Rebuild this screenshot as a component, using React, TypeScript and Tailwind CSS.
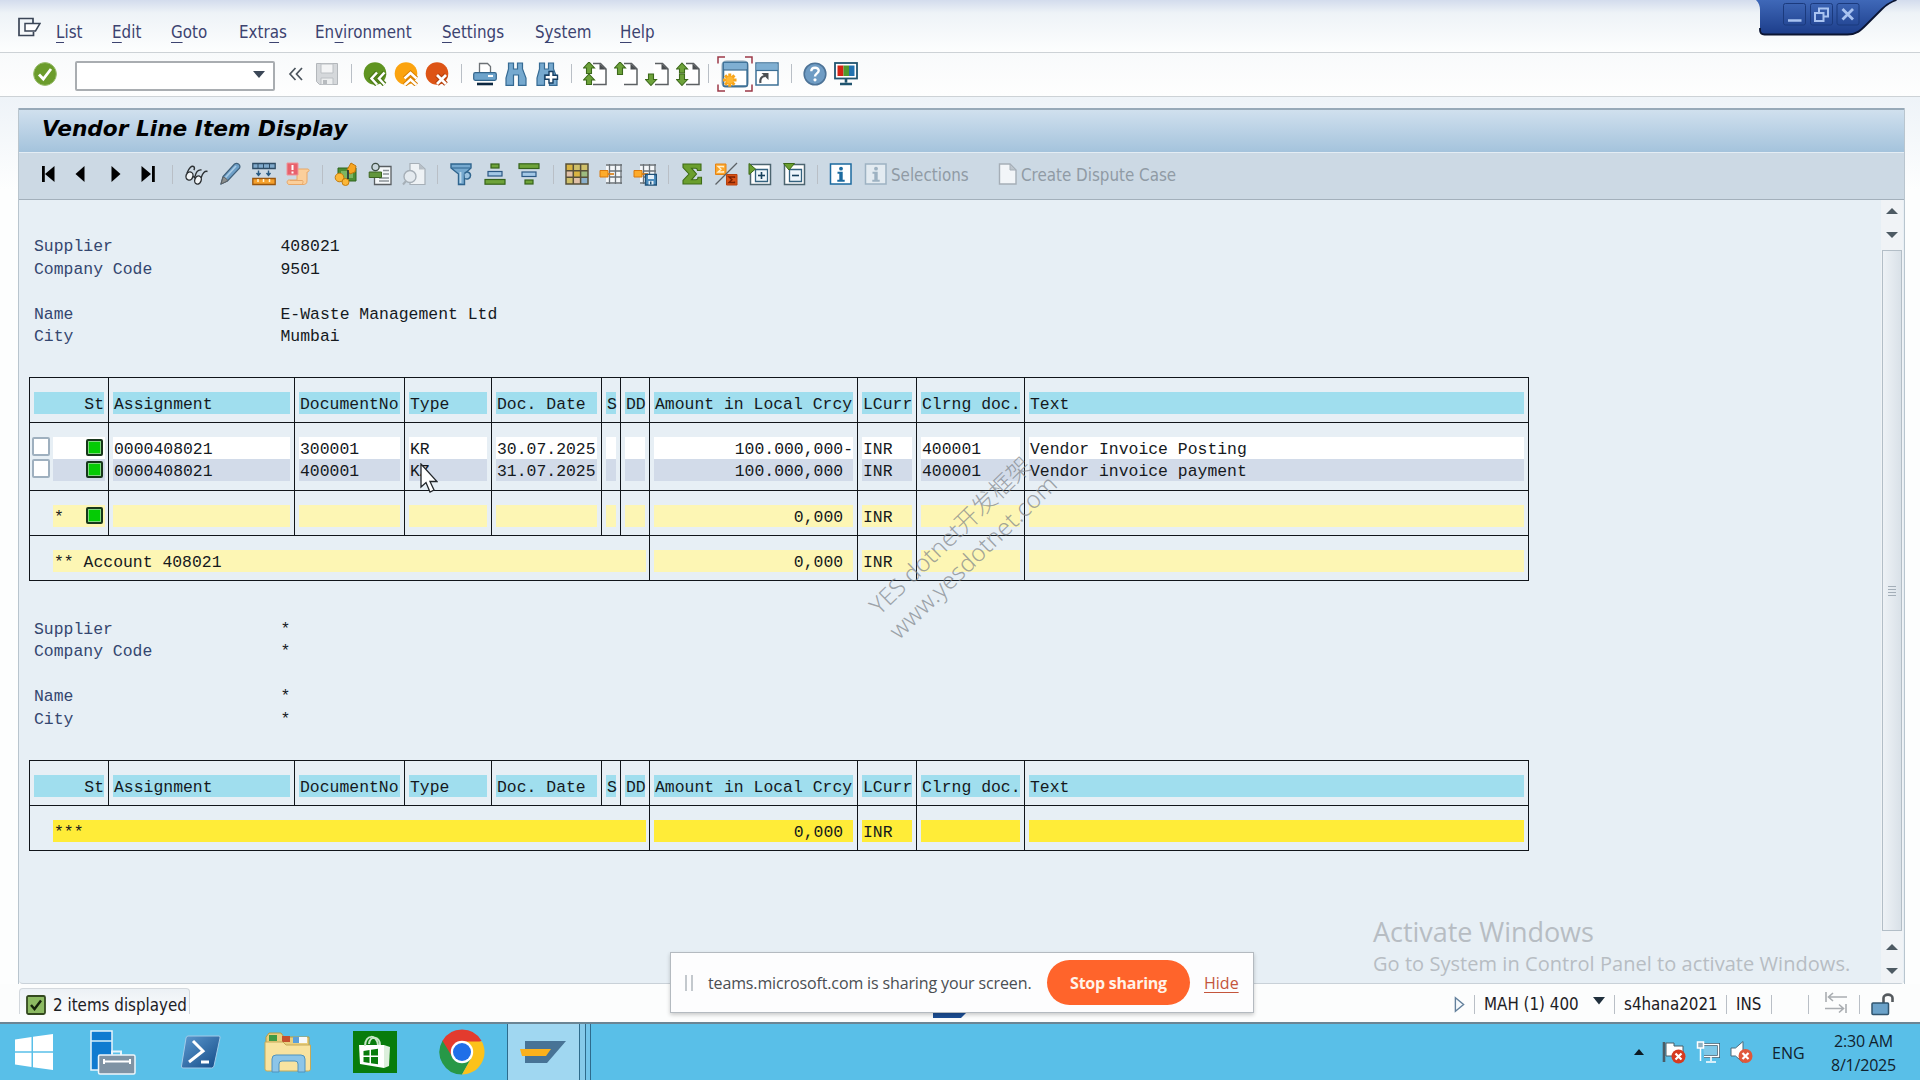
import type { ReactNode } from 'react';

interface IconProps {
  children: ReactNode;
  className?: string;
}

function Icon({ children, className = 'h-6 w-6' }: IconProps) {
  return (
    <svg viewBox="0 0 24 24" fill="none" className={`shrink-0 ${className}`}>
      {children}
    </svg>
  );
}

function Label({ children, className = '' }: IconProps) {
  return (
    <span
      className={`inline-block origin-left scale-x-[0.89] font-[family-name:'DejaVu_Sans',sans-serif] whitespace-nowrap ${className}`}
    >
      {children}
    </span>
  );
}

function Separator({ className = 'w-6' }: { className?: string }) {
  return (
    <div className={`flex shrink-0 justify-center ${className}`}>
      <div className="h-[19px] w-px bg-[#b9bfc6]" />
    </div>
  );
}

/* ---------- standard toolbar icons ---------- */

function OkIcon() {
  return (
    <Icon>
      <circle cx="12" cy="12" r="11.4" fill="#6b9c2c" stroke="#9cbf72" />
      <path d="M6 12.5l4.3 4.5L18 7" stroke="#fff" strokeWidth="2.8" />
    </Icon>
  );
}

function SaveIcon() {
  return (
    <Icon>
      <path d="M1.5 1.5h21v21h-18l-3-3z" fill="#d5d8db" stroke="#b3b7bb" />
      <path d="M6 2h12v9H6z" fill="#f3f4f5" stroke="#bcc0c4" />
      <path d="M6 16h12v6.500H6z" fill="#eceeef" stroke="#bcc0c4" />
      <path d="M8 18h4v4H8z" fill="#b7bbbf" />
    </Icon>
  );
}

function BackIcon() {
  return (
    <Icon>
      <circle cx="12" cy="11.500" r="11.300" fill="#5f9421" />
      <path d="M14 10.500l-5.500 6 5.500 6M21.500 10.500l-5.500 6 5.500 6" stroke="#4c7a17" strokeWidth="5" />
      <path d="M14 10.500l-5.500 6 5.500 6M21.500 10.500l-5.500 6 5.500 6" stroke="#fff" strokeWidth="2.500" />
    </Icon>
  );
}

function ExitIcon() {
  return (
    <Icon>
      <circle cx="12" cy="11.500" r="11.300" fill="#fba30f" />
      <path d="M10.500 16.500l6-5.500 6 5.500M10.500 23l6-5.500 6 5.500" stroke="#d97f00" strokeWidth="4.600" />
      <path d="M10.500 16.500l6-5.500 6 5.500M10.500 23l6-5.500 6 5.500" stroke="#fff" strokeWidth="2.400" />
    </Icon>
  );
}

function CancelIcon() {
  return (
    <Icon>
      <circle cx="12" cy="11.500" r="11.300" fill="#dd5415" />
      <path d="M12 13l9 9M21 13l-9 9" stroke="#b23d08" strokeWidth="5" />
      <path d="M12 13l9 9M21 13l-9 9" stroke="#fff" strokeWidth="2.800" />
    </Icon>
  );
}

function PrintIcon() {
  return (
    <Icon>
      <path d="M6.500 11V1.500h8l3 3V11" fill="#fff" stroke="#6d7276" strokeWidth="1.300" />
      <rect x=".7" y="10.700" width="22.600" height="7.600" rx="1.500" fill="#6da3cb" stroke="#33658c" strokeWidth="1.200" />
      <path d="M15 14h5" stroke="#fff" strokeWidth="2" />
      <path d="M4 22h16" stroke="#0c2740" strokeWidth="2.600" />
    </Icon>
  );
}

function FindIcon({ next = false }: { next?: boolean }) {
  return (
    <Icon>
      <path
        d="M4.500 1h5v6h4V1h5v6l3.500 9v7.300h-7.500V13h-5v10.300H2V16l2.500-9z"
        fill="#76a9cf"
        stroke="#356a93"
        strokeWidth="1.200"
      />
      {next && (
        <path
          d="M14 9.500h4v3.700h4.500v4H18V21h-4v-3.800H10v-4h4z"
          fill="#fff"
          stroke="#173f63"
          strokeWidth="1.400"
        />
      )}
    </Icon>
  );
}

function PageIcon({ arrows }: { arrows: string[] }) {
  return (
    <Icon>
      <path d="M8.500 1.500h9l5.500 5.500v15.500H8.500z" fill="#fff" />
      <path d="M10 1.500h7.500l5.500 5.500v15.500H10" stroke="#5c6063" strokeWidth="1.500" />
      <path d="M16.500 1.500l6.500 6h-6.500z" fill="#4a4e51" />
      {arrows.map((d) => (
        <path key={d} d={d} fill="#6da23a" stroke="#3c691b" strokeWidth="1.100" />
      ))}
    </Icon>
  );
}

function NewSessionIcon() {
  return (
    <Icon className="h-7 w-7">
      <rect x="2" y="2" width="20.500" height="20.500" rx="1" fill="#fff" stroke="#3d7096" strokeWidth="1.600" />
      <path d="M2.500 2.500h19.500v5.500H2.500z" fill="#7fafd2" />
      <path d="M2 8.500h20.500" stroke="#3d7096" strokeWidth="1.200" />
      <path d="M7.500 11.500v11.500M1.700 17.200h11.600M3.500 13.200l8 8M11.500 13.200l-8 8" stroke="#f8a51a" strokeWidth="2.600" />
      <circle cx="7.500" cy="17.200" r="3" fill="#ffb733" />
    </Icon>
  );
}

function ShortcutIcon() {
  return (
    <Icon>
      <rect x="1" y="1" width="22" height="22" fill="#fff" stroke="#3d7096" strokeWidth="1.500" />
      <path d="M1.500 1.500h21v6.500h-21z" fill="#7fafd2" />
      <path d="M1 8.500h22" stroke="#3d7096" strokeWidth="1.200" />
      <path d="M5.500 21c-.8-4 1-6.500 4.500-7" stroke="#4b4f52" strokeWidth="2.200" />
      <path d="M6.500 11h7v7z" fill="#4b4f52" />
    </Icon>
  );
}

function HelpIcon() {
  return (
    <Icon>
      <circle cx="12" cy="12" r="10.800" fill="#6f9cc4" stroke="#4d7397" strokeWidth="1.600" />
      <path d="M8.300 9.300c0-4.800 7.600-4.600 7.400-.5-.1 2.600-3.700 2.700-3.700 5.700" stroke="#fff" strokeWidth="2.400" />
      <circle cx="12" cy="17.800" r="1.600" fill="#fff" />
    </Icon>
  );
}

function LayoutIcon() {
  return (
    <Icon>
      <rect x="1" y="1" width="22" height="15.500" fill="#fff" stroke="#20546f" strokeWidth="1.800" />
      <path d="M3.500 3.500h6v10.500h-6z" fill="#d42314" />
      <path d="M9.500 3.500h5.500v10.500H9.500z" fill="#4f9a2d" />
      <path d="M15 3.500h5.500v10.500H15z" fill="#2272b0" />
      <path d="M12 17v3.500M6 22h12" stroke="#20546f" strokeWidth="2.600" />
    </Icon>
  );
}

/* ---------- application toolbar icons ---------- */

function NavIcon({ d }: { d: string }) {
  return (
    <Icon>
      <path d={d} fill="#000" />
    </Icon>
  );
}

function GlassesIcon() {
  return (
    <Icon>
      <g stroke="#2c3033" strokeWidth="1.400">
        <ellipse cx="5.500" cy="14" rx="3.400" ry="4.200" transform="rotate(20 5.500 14)" fill="#f2f5f7" />
        <ellipse cx="14" cy="18" rx="3.200" ry="4.200" transform="rotate(20 14 18)" fill="#f2f5f7" />
        <path d="M8.800 15c1-.8 2 0 2.200 1.500M3 11C5 6 7.500 3.500 9.500 4.500c1.500.7 1 2.500.3 3.500M17 16C18.500 11 21 8.500 23.500 9.500M11 14.500c1-4.500 3.500-7 6.500-6.500" />
      </g>
    </Icon>
  );
}

function PencilIcon() {
  return (
    <Icon>
      <path d="M3 22l2-7.500L16.500 2c3-2 6.500 1 5 4.200L9.500 19z" fill="#6d9fc7" stroke="#40607a" strokeWidth="1.200" />
      <path d="M3 22l2-7c2.500.5 4 2 4.500 4z" fill="#8c8f8e" stroke="#5c6063" />
      <path d="M7.500 15.500L18 4" stroke="#a9cbe5" strokeWidth="1.800" />
    </Icon>
  );
}

function ColumnsIcon() {
  return (
    <Icon>
      <path d="M.8 1.500h22.400v5H.8z" fill="#7fa9cb" stroke="#2f4d66" strokeWidth="1.300" />
      <path d="M6 2v5M11.500 2v5M17.500 2v5" stroke="#2f4d66" />
      <path d="M6.500 8.500v5M4.500 11l2 2.500 2-2.500M16.500 8.500v5M14.500 11l2 2.500 2-2.500" stroke="#285981" strokeWidth="1.400" />
      <path d="M.8 16.500h22.400v6H.8z" fill="#f5a02c" stroke="#98550d" strokeWidth="1.300" />
      <path d="M6 17v3M11.500 17v3M17.500 17v3" stroke="#fff2cf" strokeWidth="1.500" />
    </Icon>
  );
}

function ScrollIcon() {
  return (
    <Icon>
      <path d="M11 7h11c2 1 1 3-1 3v9c0 3-2 3.500-4 3.500H3c-2.500-.3-2.500-4.500 0-4.500h8z" fill="#fbcf9b" stroke="#e8a767" />
      <path d="M4 18.500h12.500c1 1 .5 3-1 4" stroke="#e8a767" />
      <path d="M1 1h11v12H1z" fill="#e8616c" stroke="#f0959a" />
      <path d="M6.500 3v5M6.500 9.500v2" stroke="#fff" strokeWidth="2" />
    </Icon>
  );
}

function MoneyIcon() {
  return (
    <Icon>
      <path d="M4 6h18v13H4z" fill="#4d8e34" stroke="#2e641d" />
      <path d="M7 9h12v7H7z" fill="#7db561" />
      <path d="M17 1l5 3-1 6-5 2-3-4z" fill="#f7a521" stroke="#c0760a" />
      <circle cx="5.500" cy="15.500" r="4.300" fill="#fbb738" stroke="#c57c0e" />
      <circle cx="11.500" cy="20" r="3.500" fill="#fbb738" stroke="#c57c0e" />
      <path d="M14 8v9" stroke="#1e2f38" strokeWidth="1.600" />
    </Icon>
  );
}

function ContactIcon() {
  return (
    <Icon>
      <path d="M10 4.500h13v18H6.500V15" fill="#f5f8fa" stroke="#595e62" strokeWidth="1.300" />
      <path d="M15 8.500h6M15 12h6M11 16h10M11 19h10" stroke="#8b9197" strokeWidth="1.300" />
      <circle cx="7.500" cy="5" r="3.600" fill="#c8d6dc" stroke="#3d4d43" strokeWidth="1.300" />
      <path d="M1.200 15.500V10h12.300v5.500z" fill="#62963c" stroke="#3d6420" />
    </Icon>
  );
}

function DocSearchIcon() {
  return (
    <Icon>
      <path d="M8 1.500h9l6 5.500v15.500H8z" fill="#eef2f5" stroke="#a6afb7" strokeWidth="1.200" />
      <path d="M17 1.500V7.500h6z" fill="#b7bfc6" />
      <circle cx="8" cy="14.500" r="6" fill="#e4eaef" stroke="#a6afb7" strokeWidth="1.400" />
      <path d="M4 19l-3 3.500" stroke="#a6afb7" strokeWidth="2" />
    </Icon>
  );
}

function FilterIcon() {
  return (
    <Icon>
      <path d="M2 2h20v4l-6.500 6v10.500H9.500V12L2 6z" fill="#76a9cf" stroke="#2f658e" strokeWidth="1.400" />
      <path d="M3 6h18" stroke="#2f658e" />
      <path d="M15.500 11.500c2-2.500 6-1.500 6 2 0 3.500-4 4-5.500 3" fill="#9cc3e0" stroke="#2f658e" strokeWidth="1.500" />
      <path d="M11.500 10v11" stroke="#bcd9ec" strokeWidth="1.800" />
    </Icon>
  );
}

function SortIcon({ descending = false }: { descending?: boolean }) {
  return (
    <Icon>
      <g transform={descending ? 'matrix(1 0 0 -1 0 24)' : undefined} strokeWidth="1.200">
        <rect x="8" y="2" width="8" height="4" fill="#6ea33a" stroke="#35631a" />
        <rect x="5" y="9.500" width="14" height="4.500" fill="#a4c8e6" stroke="#2b5884" />
        <rect x="2" y="17.500" width="20" height="4.700" fill="#6ea33a" stroke="#35631a" />
      </g>
    </Icon>
  );
}

function TableIcon() {
  return (
    <Icon>
      <path d="M1 2h22v20H1z" fill="#cfc06a" />
      <path d="M1 2h7v7H1zM8 9h7v6H8z" fill="#d9b443" />
      <path d="M1 9h7v6H1zM8 15h7v7H8z" fill="#e0c0a8" />
      <path d="M16 9h7v13h-7z" fill="#9dbb80" />
      <path d="M15 15h8v7h-8z" fill="#8bb0cc" />
      <path d="M1 2h22v20H1zM1 8.700h22M1 15.300h22M8.300 2v20M15.600 2v20" stroke="#57503a" strokeWidth="1.500" />
    </Icon>
  );
}

function InsertColumnIcon({ save = false }: { save?: boolean }) {
  return (
    <Icon>
      <path d="M7 2h15.500v20H7z" fill="#f4f7f9" />
      <path d="M7 3h16M11 9h12M11 15h12M7 21h16M10.500 2v20M16.500 2v20M22 2v20" stroke="#6a7177" strokeWidth="1.300" />
      <path d="M1 8.500h8v6.500H1z" fill="#fdab2b" stroke="#d9790c" />
      <path d="M9 12h6" stroke="#d9790c" strokeWidth="1.600" />
      {save && (
        <>
          <path d="M12.500 12.500h11v10.500h-11z" fill="#4d8dbd" stroke="#1e5077" strokeWidth="1.400" />
          <path d="M15 13h6v4h-6zM15.500 19h5v3.500h-5z" fill="#e3eff8" />
          <path d="M17 19.500h1.500v3H17z" fill="#1e5077" />
        </>
      )}
    </Icon>
  );
}

function SumIcon() {
  return (
    <Icon>
      <path
        d="M3 2h18v6.500h-3.500c0-1.500-.5-2.300-2-2.300h-4l5 5.800-5 5.800h4.500c1.500 0 2-.8 2-2.500H21.500V22H3v-3.500l6-6.500-6-6.500z"
        fill="#6b9f2e"
        stroke="#3f6c18"
        strokeWidth="1.100"
      />
    </Icon>
  );
}

function SubtotalIcon() {
  return (
    <Icon>
      <path d="M1.500 2h10.500v10.500H1.500z" fill="#fba62b" stroke="#e58315" />
      <path d="M9.500 5.500V4.500h-5.500l3 2.700-3 2.800h5.500V9" stroke="#fff0cf" strokeWidth="1.300" />
      <path d="M12.500 12.500H23V23H12.500z" fill="#d95216" stroke="#b8400c" />
      <path d="M20.500 16v-1H15l3 2.800-3 2.700h5.500v-1" stroke="#7c2102" strokeWidth="1.400" />
      <path d="M1.500 22.500L23 1" stroke="#5d6266" strokeWidth="1.200" />
    </Icon>
  );
}

function ExpandIcon({ collapse = false }: { collapse?: boolean }) {
  return (
    <Icon>
      <path d="M2.500 2.500h20v20h-20z" fill="#fff" stroke="#4c6570" strokeWidth="1.500" />
      <path d="M7.500 7.500h12v12h-12z" fill="#eef6fb" stroke="#33617e" strokeWidth="1.300" />
      <path d="M10 13.500h7" stroke="#17415c" strokeWidth="1.600" />
      {!collapse && <path d="M13.500 10v7" stroke="#17415c" strokeWidth="1.600" />}
      <path d={collapse ? 'M1.500 1.500h11l-5.500 6.500z' : 'M1 1.500v11l6.500-5.500z'} fill="#6b9f2e" stroke="#3b6817" />
    </Icon>
  );
}

function InfoIcon({ disabled = false }: { disabled?: boolean }) {
  const color = disabled ? '#9db2c2' : '#1b6a9f';
  return (
    <Icon>
      <rect x="1.500" y="2" width="20.500" height="20" fill={disabled ? '#e3ebf1' : '#fff'} stroke={color} strokeWidth="1.500" />
      <circle cx="12" cy="6.700" r="1.900" fill={color} />
      <path d="M8.500 9.800h5.200v8h2v1.900H8.300v-1.900h2v-6H8.500z" fill={color} />
    </Icon>
  );
}

/* ---------- window chrome ---------- */

const menus = [
  { before: '', key: 'L', after: 'ist', width: 'w-[56px]' },
  { before: '', key: 'E', after: 'dit', width: 'w-[59px]' },
  { before: '', key: 'G', after: 'oto', width: 'w-[68px]' },
  { before: 'Extr', key: 'a', after: 's', width: 'w-[76px]' },
  { before: 'En', key: 'v', after: 'ironment', width: 'w-[127px]' },
  { before: '', key: 'S', after: 'ettings', width: 'w-[93px]' },
  { before: 'S', key: 'y', after: 'stem', width: 'w-[85px]' },
  { before: '', key: 'H', after: 'elp', width: 'w-[60px]' },
];

function MenuBar() {
  return (
    <div className="flex h-[53px] items-center border-b border-[#cdd2d6] bg-linear-to-b from-[#d3dced] via-[#eef3f7] via-25% to-[#fdfefe] pt-[13px] pl-[17px] text-[17px] text-[#3c4370]">
      <Icon className="-mt-[11px] mr-[15px] h-6 w-6">
        <path d="M16 8V3.500H2v17h14.500V17" stroke="#3b4657" strokeWidth="1.700" />
        <path d="M8 8.500h15l-4.500 7.500H8z" fill="#fff" stroke="#3b4657" strokeWidth="1.500" />
      </Icon>
      {menus.map((menu) => (
        <div key={menu.before + menu.key + menu.after} className={`shrink-0 ${menu.width}`}>
          <Label>
            {menu.before}
            <span className="inline-block border-b border-[#3c4370] leading-[19px]">{menu.key}</span>
            {menu.after}
          </Label>
        </div>
      ))}
    </div>
  );
}

function WindowTab() {
  return (
    <svg viewBox="0 0 150 40" fill="none" className="absolute top-0 left-[1754px] h-10 w-[150px]">
      <defs>
        <linearGradient id="tab" x1="0" y1="0" x2="0" y2="1">
          <stop offset="0" stopColor="#3f68b8" />
          <stop offset="1" stopColor="#1c3d8a" />
        </linearGradient>
      </defs>
      <path d="M2 0c3 3 4 6 4 10v20q0 4.500 4.500 4.500h83c9 0 13-4 18-9l16-16q7-7 15-9.500z" fill="url(#tab)" />
      <path d="M6 28v2q0 4.500 4.500 4.500h83c9 0 13-4 18-9l16-16q7-7 15-9.500" stroke="#0b1533" strokeWidth="1.800" />
      <g stroke="#1b3a7d">
        <rect x="29.500" y="3.500" width="22" height="21.500" rx="2" />
        <rect x="56.500" y="3.500" width="22" height="21.500" rx="2" />
        <rect x="83" y="3.500" width="22" height="21.500" rx="2" />
      </g>
      <g stroke="#a9c3f0" strokeWidth="2">
        <path d="M34 20.500h13.500" strokeWidth="2.500" />
        <path d="M61 13h8.500v8H61zM65 12V8.500h9v8h-4" />
        <path d="M88.500 9l10.500 10.500M99 9L88.500 19.500" strokeWidth="2.800" />
      </g>
    </svg>
  );
}

function StandardToolbar() {
  return (
    <div className="flex h-[44px] items-center border-b border-[#cdd2d6] bg-linear-to-b from-[#f8fafb] to-[#fefefe] pb-[2px] pl-[33px]">
      <OkIcon />
      <div className="mt-1 ml-[18px] flex h-[30px] w-[200px] items-center justify-end rounded-[2px] border-2 border-[#a9adb1] bg-white pr-[8px] pb-[3px]">
        <svg viewBox="0 0 12 7" className="h-[7px] w-3">
          <path d="M0 0h12L6 7z" fill="#3b4757" />
        </svg>
      </div>
      <svg viewBox="0 0 16 14" fill="none" className="mr-[11px] ml-[13px] h-[14px] w-4">
        <path d="M7.500 1L2 7l5.500 6M14 1L8.500 7l5.500 6" stroke="#4b545d" strokeWidth="1.700" />
      </svg>
      <SaveIcon />
      <Separator />
      <div className="flex gap-[7px]">
        <BackIcon />
        <ExitIcon />
        <CancelIcon />
      </div>
      <Separator />
      <div className="flex gap-[7px]">
        <PrintIcon />
        <FindIcon />
        <FindIcon next />
      </div>
      <Separator />
      <div className="flex gap-[7px]">
        <PageIcon arrows={['M6 0l5.500 6H8.500v5.500h-5V6H.5z', 'M6 12l5.500 6H8.500v4.500h-5V18H.5z']} />
        <PageIcon arrows={['M6 0l5.500 6H8.500v6.500h-5V6H.5z']} />
        <PageIcon arrows={['M6 23.500l5.500-6H8.500V12h-5v5.500H.5z']} />
        <PageIcon arrows={['M6 1l5.500 6H8.500v4h-5V7H.5z', 'M6 23.500l5.500-6H8.500V12h-5v5.500H.5z']} />
      </div>
      <Separator className="w-[17px]" />
      <div className="relative flex h-9 w-9 items-center justify-center">
        <div className="flex h-[28px] w-[28px] items-center justify-center rounded-md bg-[#c5d0d8]">
          <NewSessionIcon />
        </div>
        <svg viewBox="0 0 36 36" fill="none" className="absolute inset-0">
          <path d="M1 7.500V1h7M28 1h7v6.500M35 28.500V35h-7M8 35H1v-6.500" stroke="#9c3947" strokeWidth="1.500" />
        </svg>
      </div>
      <div className="ml-[2px]">
        <ShortcutIcon />
      </div>
      <Separator />
      <div className="flex gap-[7px]">
        <HelpIcon />
        <LayoutIcon />
      </div>
    </div>
  );
}

function ApplicationToolbar() {
  return (
    <div className="flex h-[47px] items-center border-b border-[#a3b0bb] bg-[#ccd9e4] pb-[4px] pl-[17px]">
      <NavIcon d="M6 4h2.800v16H6zM18.500 4v16l-9.500-8z" />
      <div className="ml-2 flex">
        <NavIcon d="M16.500 4v16L7.500 12z" />
      </div>
      <div className="ml-3 flex">
        <NavIcon d="M7.500 4v16l9-8z" />
      </div>
      <div className="ml-2 flex">
        <NavIcon d="M5.500 4v16l9.500-8zM16 4h2.800v16H16z" />
      </div>
      <Separator />
      <div className="flex gap-[10px]">
        <GlassesIcon />
        <PencilIcon />
        <ColumnsIcon />
        <ScrollIcon />
      </div>
      <Separator />
      <div className="flex gap-[10px]">
        <MoneyIcon />
        <ContactIcon />
        <DocSearchIcon />
      </div>
      <Separator className="w-[23px]" />
      <div className="flex gap-[10px]">
        <FilterIcon />
        <SortIcon />
        <SortIcon descending />
      </div>
      <Separator />
      <div className="flex gap-[10px]">
        <TableIcon />
        <InsertColumnIcon />
        <InsertColumnIcon save />
      </div>
      <Separator className="w-[23px]" />
      <div className="flex gap-[10px]">
        <SumIcon />
        <SubtotalIcon />
        <ExpandIcon />
        <ExpandIcon collapse />
      </div>
      <Separator className="w-[23px]" />
      <div className="flex items-center gap-[11px] text-[17px] text-[#909ba5]">
        <InfoIcon />
        <div className="flex w-[121px] items-center gap-[3px]">
          <InfoIcon disabled />
          <Label className="mt-[3px]">Selections</Label>
        </div>
        <div className="flex items-center gap-[1px]">
          <Icon>
            <path d="M3.500 2h10.500l6 6v14h-16.500z" fill="#f2f5f8" stroke="#a5aeb7" strokeWidth="1.400" />
            <path d="M14 2v6h6z" fill="#bdc5cc" stroke="#a5aeb7" />
          </Icon>
          <Label className="mt-[3px]">Create Dispute Case</Label>
        </div>
      </div>
    </div>
  );
}

/* ---------- report ---------- */

interface ReportHeaderProps {
  supplier: string;
  companyCode: string;
  name: string;
  city: string;
}

function ReportHeader({ supplier, companyCode, name, city }: ReportHeaderProps) {
  const rows = [
    ['Supplier', supplier],
    ['Company Code', companyCode],
    ['', ''],
    ['Name', name],
    ['City', city],
  ];

  return (
    <div className="pl-[15px]">
      {rows.map(([label, value], index) => (
        <div key={index} className="flex h-[22.55px]">
          <div className="w-[246.5px] text-[#34466f]">{label}</div>
          <div>{value}</div>
        </div>
      ))}
    </div>
  );
}

interface CellProps {
  lines: ReactNode[];
  color?: string;
  align?: string;
}

const colors: Record<string, string[]> = {
  header: ['bg-[#a0deee]'],
  item: ['bg-white', 'bg-[#d2dbe9]'],
  subtotal: ['bg-[#fdf6b4]'],
  total: ['bg-[#ffec38]'],
};

function Cell({ lines, color = 'item', align = 'pl-px' }: CellProps) {
  return (
    <div className="border-l border-[#10151a] pt-[14px] pr-[4px] pl-[4px]">
      {lines.map((line, index) => (
        <div key={index} className={`h-[22px] leading-[25px] whitespace-pre ${colors[color][index]} ${align}`}>
          {line}
        </div>
      ))}
    </div>
  );
}

function Group({ children, height = 'h-[45px]' }: { children: ReactNode; height?: string }) {
  return (
    <div
      className={`grid grid-cols-[79px_186px_110px_87px_110px_19px_29px_208px_59px_108px_504px] border-t border-r border-[#10151a] ${height}`}
    >
      {children}
    </div>
  );
}

const headings = [
  'Assignment',
  'DocumentNo',
  'Type',
  'Doc. Date',
  'S',
  'DD',
  'Amount in Local Crcy',
  'LCurr',
  'Clrng doc.',
  'Text',
];

function HeaderGroup() {
  return (
    <Group>
      <Cell color="header" align="text-right" lines={['St']} />
      {headings.map((heading) => (
        <Cell key={heading} color="header" lines={[heading]} />
      ))}
    </Group>
  );
}

function StatusLight() {
  return <span className="block h-[17px] w-[17px] rounded-[2px] border-2 border-[#17361b] bg-[#05cb05] shadow-[inset_0_0_0_1px_#7fd67f]" />;
}

function ItemGroup() {
  const columns = [
    ['0000408021', '0000408021'],
    ['300001', '400001'],
    ['KR', 'KZ'],
    ['30.07.2025', '31.07.2025'],
    ['', ''],
    ['', ''],
    ['100.000,000-', '100.000,000 '],
    ['INR', 'INR'],
    ['400001', '400001'],
    ['Vendor Invoice Posting', 'Vendor invoice payment'],
  ];

  return (
    <Group height="h-[68px]">
      <div className="border-l border-[#10151a] pt-[14px] pr-[3px] pl-[2px]">
        {colors.item.map((color) => (
          <div key={color} className="flex h-[22px] justify-between">
            <span className="h-[19px] w-[18px] rounded-[2px] border-2 border-[#9fb0bf] bg-white" />
            <div className={`flex w-[52px] justify-end pt-[2px] pr-[2px] ${color}`}>
              <StatusLight />
            </div>
          </div>
        ))}
      </div>
      {columns.map((lines, index) => (
        <Cell key={index} lines={lines} align={index === 6 ? 'text-right' : 'pl-px'} />
      ))}
    </Group>
  );
}

interface TotalGroupProps {
  label: string;
  color?: string;
}

function TotalGroup({ label, color = 'subtotal' }: TotalGroupProps) {
  return (
    <Group>
      <div className="col-span-7 border-l border-[#10151a] pt-[14px] pr-[3px] pl-[23px]">
        <div className={`h-[22px] pl-px leading-[25px] ${colors[color][0]}`}>{label}</div>
      </div>
      <Cell color={color} align="text-right" lines={['0,000 ']} />
      <Cell color={color} lines={['INR']} />
      <Cell color={color} lines={['']} />
      <Cell color={color} lines={['']} />
    </Group>
  );
}

function SubtotalGroup() {
  return (
    <Group>
      <div className="border-l border-[#10151a] pt-[14px] pr-[3px] pl-[23px]">
        <div className="flex h-[22px] justify-between bg-[#fdf6b4] pr-[2px] pl-px leading-[25px]">
          *
          <div className="pt-[2px]">
            <StatusLight />
          </div>
        </div>
      </div>
      {['', '', '', '', '', ''].map((line, index) => (
        <Cell key={index} color="subtotal" lines={[line]} />
      ))}
      <Cell color="subtotal" align="text-right" lines={['0,000 ']} />
      <Cell color="subtotal" lines={['INR']} />
      <Cell color="subtotal" lines={['']} />
      <Cell color="subtotal" lines={['']} />
    </Group>
  );
}

function Arrow({ down = false }: { down?: boolean }) {
  return (
    <svg viewBox="0 0 12 6" className="h-[6px] w-3">
      <path d={down ? 'M0 0h12L6 6z' : 'M0 6h12L6 0z'} fill="#4d5a63" />
    </svg>
  );
}

function ScrollBar() {
  return (
    <div className="mr-px flex w-[22px] flex-col items-center bg-[#f0f3f6] pt-2">
      <div className="flex flex-col gap-[18px]">
        <Arrow />
        <Arrow down />
      </div>
      <div className="mt-3 flex h-[681px] w-5 flex-col items-center justify-center gap-[2px] border border-[#b3bec7] bg-linear-to-r from-[#eef2f6] to-[#d9e1e8]">
        <div className="h-px w-2 bg-[#a3aeb8]" />
        <div className="h-px w-2 bg-[#a3aeb8]" />
        <div className="h-px w-2 bg-[#a3aeb8]" />
        <div className="h-px w-2 bg-[#a3aeb8]" />
      </div>
      <div className="mt-[13px] flex flex-col gap-[18px]">
        <Arrow />
        <Arrow down />
      </div>
    </div>
  );
}

function Report() {
  return (
    <div className="flex h-[784px] justify-between rounded-b-sm border-b border-[#c9d1d8] bg-[#e7eff5]">
      <div className="pt-[36px] font-[family-name:'Liberation_Mono',monospace] text-[16.43px] leading-[22.55px] text-[#15191d]">
        <ReportHeader supplier="408021" companyCode="9501" name="E-Waste Management Ltd" city="Mumbai" />
        <div className="mt-[28px] ml-[10px] border-b border-[#10151a]">
          <HeaderGroup />
          <ItemGroup />
          <SubtotalGroup />
          <TotalGroup label="** Account 408021" />
        </div>
        <div className="mt-[38px]">
          <ReportHeader supplier="*" companyCode="*" name="*" city="*" />
        </div>
        <div className="mt-[29px] ml-[10px] border-b border-[#10151a]">
          <HeaderGroup />
          <TotalGroup label="***" color="total" />
        </div>
      </div>
      <ScrollBar />
    </div>
  );
}

function StatusBar() {
  return (
    <div className="flex h-[40px] justify-between border-b-2 border-[#6b8594] bg-[#fcfdfd] pl-[19px] text-[17px] text-[#1c2024]">
      <div className="mt-1 flex h-[26px] w-[171px] items-center rounded-t-sm border border-b-0 border-[#d3d8dd] bg-linear-to-b from-[#ecf1f5] to-[#fbfcfd] pt-[6px] pl-[6px]">
        <svg viewBox="0 0 20 20" fill="none" className="mr-[7px] h-5 w-5 shrink-0">
          <rect x="1" y="1" width="18" height="18" rx="1.500" fill="#8cba62" stroke="#33491f" strokeWidth="1.800" />
          <path d="M5 10l3.500 4L15 5.500" stroke="#15240b" strokeWidth="2.400" />
        </svg>
        <Label className="mt-[2px]">2 items displayed</Label>
      </div>
      <div className="flex items-center pt-[2px] pr-[25px]">
        <svg viewBox="0 0 12 18" fill="none" className="h-[17px] w-[11px]">
          <path d="M1.500 1.500v15L10.500 9z" fill="#f5f9fc" stroke="#63809c" strokeWidth="1.500" />
        </svg>
        <Separator className="w-[19px]" />
        <div className="w-[109px] pt-[2px]">
          <Label>MAH (1) 400</Label>
        </div>
        <svg viewBox="0 0 12 8" className="-mt-[6px] h-2 w-3">
          <path d="M0 0h12L6 7.500z" fill="#20303d" />
        </svg>
        <Separator className="w-[19px]" />
        <div className="w-[93px] pt-[2px]">
          <Label>s4hana2021</Label>
        </div>
        <Separator className="w-[19px]" />
        <div className="w-[26px] pt-[2px]">
          <Label>INS</Label>
        </div>
        <Separator className="w-[19px]" />
        <Separator className="ml-3 w-[31px]" />
        <Icon className="-mt-1 h-6 w-6">
          <path d="M2 2v10M5 7h18M9 3L4.500 7 9 11M22 14v9M1 18.500h18M15 14.500l4.500 4-4.500 4" stroke="#a9adb1" strokeWidth="1.600" />
        </Icon>
        <Separator className="w-[23px]" />
        <Icon>
          <path d="M12.500 11V6c0-4.500 9-4.500 9 0v4" stroke="#555a5e" strokeWidth="2.600" />
          <rect x="1" y="11" width="16.500" height="11.500" rx="1" fill="#6ba2c9" stroke="#31566f" strokeWidth="1.500" />
        </Icon>
      </div>
    </div>
  );
}

/* ---------- taskbar ---------- */

function Taskbar() {
  return (
    <div className="flex h-[56px] items-center justify-between bg-[#59bfe8] pr-[25px] font-[family-name:'Open_Sans','Noto_Sans',sans-serif] text-[#10222e]">
      <div className="flex h-full items-center">
        <svg viewBox="0 0 38 36" className="ml-[15px] h-9 w-[38px]">
          <path d="M0 5.500L16.500 3v14.300H0zM18 2.700L38 0v17.300H18zM0 18.700h16.500V33L0 30.500zM18 18.700h20V36l-20-2.700z" fill="#fff" />
        </svg>
        <svg viewBox="0 0 46 45" fill="none" className="ml-[37px] h-[45px] w-[46px]">
          <path d="M1 1h21v39H1z" fill="#0f7bd0" stroke="#e8f5fc" strokeWidth="1.500" />
          <path d="M1 11h21" stroke="#d9effa" strokeWidth="1.500" />
          <path d="M22 24v-2.500h9V25" stroke="#e8f5fc" strokeWidth="2" />
          <rect x="8.500" y="25" width="36.500" height="19" rx="1.500" fill="#7f93a4" stroke="#eef6fa" strokeWidth="1.500" />
          <path d="M14 31.500h26M14 29v5M40 29v5" stroke="#fff" strokeWidth="2" />
        </svg>
        <svg viewBox="0 0 40 34" fill="none" className="ml-[45px] h-[34px] w-10">
          <defs>
            <linearGradient id="shell" x1="0" y1="0" x2="1" y2="1">
              <stop offset="0" stopColor="#5d9ad0" />
              <stop offset="1" stopColor="#134a86" />
            </linearGradient>
          </defs>
          <path d="M7 1h31q1.500 0 1 2l-6 28q-.5 2-2.500 2H2q-2 0-1.500-2L5 3q.5-2 2-2z" fill="url(#shell)" stroke="#a3cbe8" />
          <path d="M12 6l10 10-14 11M20 27h8" stroke="#fff" strokeWidth="3" />
        </svg>
        <svg viewBox="0 0 48 42" fill="none" className="ml-[43px] h-[42px] w-12">
          <path d="M2 6l3-4h12l3 4h25v32H2z" fill="#e9ce7d" stroke="#b79a45" />
          <path d="M5 4h8v6H5z" fill="#3f9a45" />
          <path d="M18 5h8v6h-8z" fill="#c4502f" />
          <path d="M29 6h14v6H29z" fill="#f7f9fa" />
          <path d="M29 6h6v6h-6z" fill="#5aa0dc" />
          <path d="M1 11h18l3 3h24.500v24q0 2-2 2H3q-2 0-2-2z" fill="#f8e3a0" stroke="#c5aa58" />
          <path d="M8 41V28q0-4 4-4h25q4 0 4 4v13h-7v-8q0-3-3-3H18q-3 0-3 3v8z" fill="#8cc5e8" stroke="#4f93bf" />
        </svg>
        <svg viewBox="0 0 44 42" fill="none" className="ml-[41px] h-[42px] w-11">
          <path d="M0 0h44v42H0z" fill="#087c0c" />
          <path d="M6 14h25v23L7 33z" fill="#fff" />
          <path d="M31 14l6 2-1 19-5 2z" fill="#dcefdc" />
          <path d="M12 15c0-12 12-12 13-1M16 13c1-9 11-8 11 1" stroke="#c7e6c8" strokeWidth="2" />
          <path d="M10.500 20l6-1v5.500h-6zM18 18.700l7-1v6.800h-7zM10.500 26h6v6l-6-1zM18 26h7v7.300l-7-1z" fill="#087c0c" />
        </svg>
        <svg viewBox="0 0 46 46" className="ml-[42px] h-[46px] w-[46px]">
          <path d="M23 23L3.500 11.700A22.500 22.500 0 0 1 42.500 11.700z" fill="#e33b2e" />
          <path d="M23 23L3.500 11.700A22.500 22.500 0 0 0 23 45.500l9.700-16.900z" fill="#279847" />
          <path d="M23 12.500h19.900A22.500 22.500 0 0 1 23 45.500l9.500-17z" fill="#fcc21b" />
          <path d="M3.500 11.700L13.700 28.600 23 12.500z" fill="#e33b2e" />
          <circle cx="23" cy="23" r="11.200" fill="#fff" />
          <circle cx="23" cy="23" r="9" fill="#1f6fe8" />
        </svg>
        <div className="ml-[22px] flex h-full items-center border-x border-[#2e6b8c] bg-[#a0d7f1]">
          <svg viewBox="0 0 46 22" className="mr-[13px] ml-[12px] h-[22px] w-[46px]">
            <path d="M5 0h41L27 22H5z" fill="#477396" />
            <path d="M0 8h31l-5 7H2z" fill="#fbb11c" />
          </svg>
        </div>
        <div className="h-full w-[6px] border-r border-[#2e6b8c] bg-[#86caea]" />
        <div className="h-full w-[5px] border-r border-[#2e6b8c] bg-[#74c5ea]" />
      </div>
      <div className="flex items-center text-[16px]">
        <svg viewBox="0 0 10 6" className="mr-[18px] h-[6px] w-[10px]">
          <path d="M0 6h10L5 0z" fill="#0c1a23" />
        </svg>
        <Icon className="mr-[10px] h-6 w-6">
          <path d="M2 2v20" stroke="#4b5c66" strokeWidth="2.600" />
          <path d="M4 3h8v3h9v10H4z" fill="#fff" stroke="#4b5c66" />
          <circle cx="16.500" cy="16.500" r="7" fill="#d63b21" />
          <path d="M13.500 13.500l6 6M19.500 13.500l-6 6" stroke="#fff" strokeWidth="2.200" />
        </Icon>
        <Icon className="mr-[10px] h-6 w-6">
          <path d="M7 4.500h15.500v12H8" fill="#7fc8e8" stroke="#33576b" strokeWidth="3" />
          <path d="M7 4.500h15.500v12H8M15 17v4M10 22h10" stroke="#fff" strokeWidth="1.500" />
          <path d="M1.500 2h6v6h-6zM4.500 8v13" fill="#8fb0c0" stroke="#fff" strokeWidth="1.500" />
        </Icon>
        <Icon className="mr-[18px] h-6 w-6">
          <path d="M1 8h4.500L13 1.500v21L5.500 16H1z" fill="#fff" stroke="#4b6b7c" />
          <circle cx="15.500" cy="16" r="7" fill="#e0573a" />
          <path d="M12.500 13l6 6M18.500 13l-6 6" stroke="#fff" strokeWidth="2.200" />
        </Icon>
        <span className="w-[60px] pt-[2px]">ENG</span>
        <div className="flex w-[63px] flex-col items-center pt-px leading-6 tracking-[-0.2px] whitespace-nowrap">
          <span>2:30 AM</span>
          <span>8/1/2025</span>
        </div>
      </div>
    </div>
  );
}

/* ---------- overlays ---------- */

function SharingBar() {
  return (
    <div className="absolute top-[952px] left-[670px] flex h-[61px] w-[584px] items-center border border-[#b4bac0] bg-[#fdfdfe] font-[family-name:'Open_Sans','Noto_Sans',sans-serif] text-[16px] whitespace-nowrap text-[#4a4e52] shadow-[0_2px_4px_rgba(0,0,0,0.2)]">
      <div className="ml-[14px] h-4 w-[8px] border-x-2 border-[#c3c8cd]" />
      <span className="ml-[15px] w-[339px] tracking-[-0.13px]">teams.microsoft.com is sharing your screen.</span>
      <div className="flex h-[45px] w-[143px] items-center justify-center rounded-full bg-[#ff642b] font-bold tracking-[-0.25px] text-[#fff3e8]">
        Stop sharing
      </div>
      <span className="ml-[14px] text-[#c4553c] underline underline-offset-[3px]">Hide</span>
    </div>
  );
}

export default function App() {
  return (
    <div className="relative h-[1080px] w-[1920px] overflow-hidden bg-[#f7fafc] font-[family-name:'DejaVu_Sans',sans-serif]">
      <MenuBar />
      <StandardToolbar />
      <div className="h-[927px] bg-linear-to-b from-[#eef3f8] to-[#fdfefe] to-10% pt-[11px] pr-[15px] pl-[18px]">
        <div className="h-full border-x border-[#b9c5ce]">
          <div className="flex h-[45px] items-center border-t-2 border-b border-t-[#97a9b8] border-b-[#e4edf4] bg-linear-to-b from-[#d0e0ee] to-[#a4c3dc] pb-[5px] pl-[23px] text-[22px] font-bold text-black italic">
            <span className="inline-block origin-left scale-x-[0.985] whitespace-nowrap">Vendor Line Item Display</span>
          </div>
          <ApplicationToolbar />
          <Report />
        </div>
      </div>
      <div className="relative -mt-[40px]">
        <StatusBar />
      </div>
      <Taskbar />

      <WindowTab />

      <svg viewBox="0 0 18 30" className="absolute top-[463px] left-[420px] h-[30px] w-[18px]">
        <path d="M1 1v23l5-4.500L10 29l4-2-4-8.500h7z" fill="#fff" stroke="#22262a" strokeWidth="1.300" />
      </svg>

      <div className="absolute top-[506px] left-[850px] w-[240px] -rotate-[44deg] font-[family-name:'Noto_Sans','Noto_Sans_CJK_SC',sans-serif] text-[24px] leading-[31px] font-light whitespace-nowrap text-[#7b8187]/70">
        <div>YES dotnet开发框架</div>
        <div className="-ml-[3px] tracking-[0.2px]">www.yesdotnet.com</div>
      </div>

      <div className="absolute top-[912px] left-[1373px] font-[family-name:'Open_Sans','Noto_Sans',sans-serif] whitespace-nowrap text-[#b7bdc3]">
        <div className="text-[27px] leading-[40px] tracking-[-0.05px]">Activate Windows</div>
        <div className="text-[20px] leading-[24px] tracking-[0.05px]">
          Go to System in Control Panel to activate Windows.
        </div>
      </div>

      <svg viewBox="0 0 34 7" className="absolute top-[1012px] left-[933px] h-[7px] w-[34px]">
        <path d="M0 0h34l-6 6H0z" fill="#1d4f95" />
      </svg>
      <SharingBar />
    </div>
  );
}
